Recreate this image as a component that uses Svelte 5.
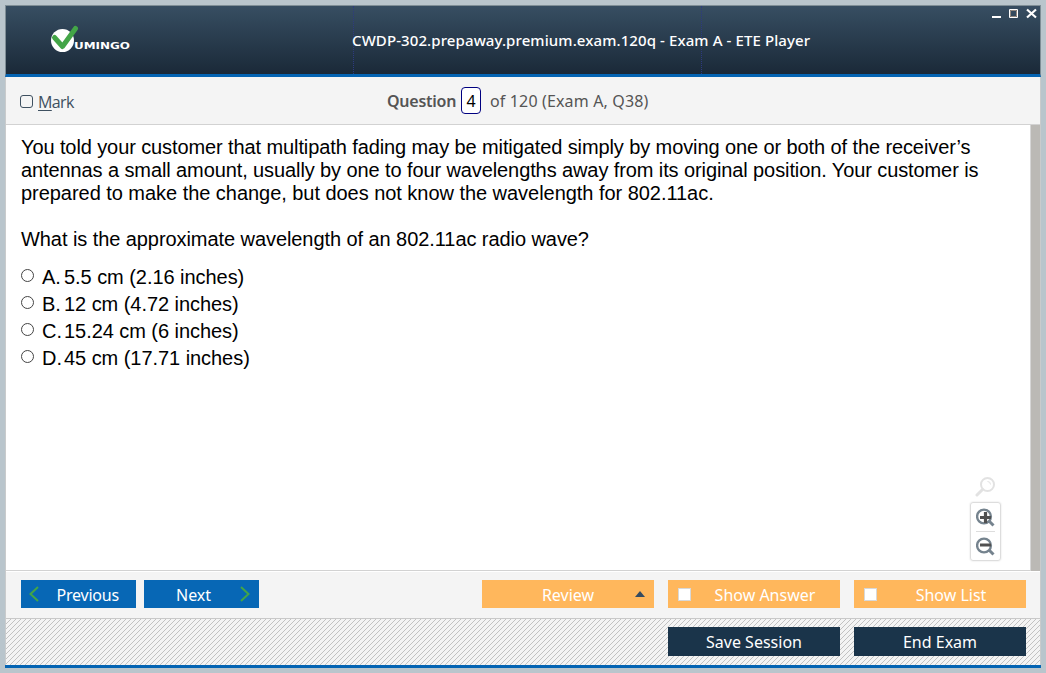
<script>
  const answers = [
    ['A.', '5.5 cm (2.16 inches)'],
    ['B.', '12 cm (4.72 inches)'],
    ['C.', '15.24 cm (6 inches)'],
    ['D.', '45 cm (17.71 inches)']
  ];
  const lines = [
    'You told your customer that multipath fading may be mitigated simply by moving one or both of the receiver’s',
    'antennas a small amount, usually by one to four wavelengths away from its original position. Your customer is',
    'prepared to make the change, but does not know the wavelength for 802.11ac.',
    '',
    'What is the approximate wavelength of an 802.11ac radio wave?'
  ];
</script>

<div class="window">
  <header>
    <svg class="logo" width="84" height="30" viewBox="0 0 84 30">
      <circle cx="12.5" cy="15.5" r="11.5" fill="#fff" />
      <path d="M4.500 12.500L12.500 21.500L25.500 3.500" fill="none" stroke="#43a547" stroke-width="5" stroke-linecap="round" stroke-linejoin="round" />
      <text x="24" y="24" textLength="56" lengthAdjust="spacingAndGlyphs" font-size="9.5" font-weight="bold" fill="#fff">UMINGO</text>
    </svg>
    <h1><span>CWDP-302.prepaway.premium.exam.120q - Exam A - ETE Player</span></h1>
    <svg class="controls" width="46" height="12" viewBox="0 0 46 12">
      <path d="M0 8h9v2H0z" fill="#fff" />
      <path d="M17.500 1.500h8v8h-8z" fill="none" stroke="#fff" />
      <path d="M18.500 2.500h6v6h-6z" fill="none" stroke="#93887f" />
      <path d="M35 1.500L44 9.500M44 1.500L35 9.500" stroke="#fff" stroke-width="2.200" />
    </svg>
  </header>
  <div class="bar">
    <label class="mark"><i></i><span><u>M</u>ark</span></label>
    <div class="counter"><b>Question</b><span class="num">4</span><span class="of">of 120 (Exam A, Q38)</span></div>
  </div>
  <main>
    <section>
      <div class="question">
        {#each lines as line, i}<p class:tight={i < 2} class:last={i === 4}>{line}</p>{/each}
      </div>
      <div class="answers">
        {#each answers as [letter, text]}
          <label><i></i><span class="letter">{letter}</span><span class="text">{text}</span></label>
        {/each}
      </div>
      <div class="zoom">
        <svg width="22" height="22" viewBox="0 0 22 22" fill="none" stroke="#e2e2e2">
          <circle cx="12.500" cy="8.500" r="6.500" stroke-width="2" /><path d="M7.500 13.500L2 19" stroke-width="3" stroke-linecap="round" /><path d="M12.500 5.500a3 3 0 0 1 3 3" />
        </svg>
        <div class="box">
          <svg width="20" height="22" viewBox="0 0 20 22" fill="none" stroke="#75838e">
            <circle cx="8" cy="9.500" r="6.900" stroke-width="2.400" /><path d="M13 14L17.500 18.500" stroke-width="3" /><path d="M4 10.500H15M9.500 5V16" stroke="#505050" stroke-width="3.200" />
          </svg>
          <hr />
          <svg width="20" height="22" viewBox="0 0 20 22" fill="none" stroke="#75838e">
            <circle cx="8" cy="9.500" r="6.900" stroke-width="2.400" /><path d="M13 14L17.500 18.500" stroke-width="3" /><path d="M4 9H15" stroke="#505050" stroke-width="3" />
          </svg>
        </div>
      </div>
    </section>
    <div class="scroll"></div>
  </main>
  <div class="actions">
    <button class="nav prev"><svg width="10" height="16" viewBox="0 0 10 16"><path d="M9 1L1.500 8L9 15" /></svg><span>Previous</span></button>
    <button class="nav next"><span>Next</span><svg width="10" height="16" viewBox="0 0 10 16"><path d="M1 1L8.500 8L1 15" /></svg></button>
    <button class="orange review"><span>Review</span><i></i></button>
    <button class="orange check"><i></i><span>Show Answer</span></button>
    <button class="orange check"><i></i><span>Show List</span></button>
  </div>
  <footer>
    <svg class="hatch" width="100%" height="100%" shape-rendering="crispEdges">
      <defs><pattern id="hatch" width="5" height="5" patternUnits="userSpaceOnUse">
        <path d="M4 0h1v1h-1zM3 1h1v1h-1zM2 2h1v1h-1zM1 3h1v1h-1zM0 4h1v1h-1z" fill="#c2c2c2" />
      </pattern></defs>
      <rect width="100%" height="100%" fill="url(#hatch)" />
    </svg>
    <button>Save Session</button>
    <button>End Exam</button>
  </footer>
</div>

<style>
  :global(body) { margin: 0; background: #b9c5cc; }
  * { box-sizing: border-box; }
  .window { width: 1036px; height: 663px; margin: 5px; border: solid #c9cbcc; border-width: 0 1px; display: flex; flex-direction: column; font-family: "Open Sans", sans-serif; background: #f4f4f4; }
  header { height: 72px; margin: 0 -1px; border: 1px solid #7f8e96; border-bottom: 3px solid #0464b3; background: linear-gradient(#374e62, #1a2938); display: grid; grid-template-columns: 347px 349px 1fr; flex: none; }
  .logo { margin: 19px 0 0 44px; font-family: "DejaVu Sans", sans-serif; }
  h1 { margin: 0; border: dotted #2d3a80; border-width: 0 1px; font-size: 15px; line-height: 20px; font-weight: 500; color: #fff; white-space: nowrap; padding-top: 24px; font-family: "Noto Sans", sans-serif; letter-spacing: 0.1px; }
  h1 span { margin-left: -2px; }
  .controls { justify-self: end; margin: 2px 2px 0 0; }
  .bar { height: 48px; border-bottom: 1px solid #d2d2d2; display: flex; align-items: center; color: #555; font-size: 16px; flex: none; white-space: nowrap; }
  .mark { display: flex; align-items: center; width: 381px; padding: 3px 0 0 14px; gap: 5px; color: #3e5060; letter-spacing: -0.6px; }
  .mark i { width: 13px; height: 13px; border: 1px solid #3e5060; border-radius: 3px; margin-top: -2px; }
  .mark u { text-underline-offset: 2px; }
  .counter { display: flex; align-items: center; font-family: "Noto Sans", sans-serif; }
  .counter b { font-weight: 600; width: 74px; letter-spacing: -0.25px; }
  .num { width: 20px; height: 27px; line-height: 27px; border: 1px solid #000080; border-radius: 4px; background: #fff; color: #000; text-align: center; }
  .of { margin-left: 9px; letter-spacing: 0.15px; }
  main { height: 447px; flex: none; display: flex; border-bottom: 1px solid #fff; }
  section { flex: 1; background: #fff; position: relative; border-bottom: 1px solid #d2d2d2; border-right: 1px solid #d6d6d6; font: 20px/23px "Liberation Sans", Arial, sans-serif; color: #000; padding: 11px 0 0 15px; }
  .scroll { width: 9px; background: #bbb9b5; }
  p { margin: 0; height: 23px; white-space: nowrap; letter-spacing: -0.04px; }
  .tight { letter-spacing: -0.1px; }
  .last { letter-spacing: -0.07px; }
  .answers { margin-top: 12px; }
  .answers label { height: 27px; display: flex; align-items: center; line-height: 27px; }
  .answers i { width: 13px; height: 13px; border: 1px solid #444; border-radius: 50%; margin: -3px 8px 0 0; }
  .answers span { padding-top: 2px; }
  .letter { width: 22px; white-space: nowrap; }
  .text { letter-spacing: -0.05px; }
  .zoom { position: absolute; right: 29px; bottom: 9px; width: 31px; display: flex; flex-direction: column; align-items: center; }
  .box { width: 31px; height: 59px; border: 1px solid #ddd; border-radius: 3px; box-shadow: 0 0 2px #ddd; display: flex; flex-direction: column; align-items: center; padding-top: 4px; margin-top: 4px; }
  .zoom svg { display: block; flex: none; }
  hr { width: 19px; height: 1px; border: 0; background: #ddd; margin: 2px 0 4px; flex: none; }
  button { border: 0; padding: 0; color: #fff; font: 16px/30px "Noto Sans", sans-serif; height: 28px; white-space: nowrap; }
  .actions { height: 47px; flex: none; border-bottom: 1px solid #c9c9c9; display: flex; padding: 8px 14px 0 15px; }
  .nav { width: 115px; background: #0767b5; display: flex; align-items: center; justify-content: space-between; margin-right: 8px; }
  .nav path { fill: none; stroke: #43a547; stroke-width: 2; }
  .nav span { padding-top: 1px; }
  .prev { padding: 0 17px 0 8px; }
  .prev span { letter-spacing: -0.2px; }
  .next { padding: 0 9px 0 32px; }
  .orange { background: #ffb75c; width: 172px; margin-left: 14px; position: relative; text-align: center; }
  .orange span { display: block; height: 28px; line-height: 30px; }
  .review { margin-left: auto; }
  .review i { position: absolute; right: 9px; top: 11px; border: solid transparent; border-width: 0 5px 6px; border-bottom-color: #344b60; }
  .check i { position: absolute; left: 10px; top: 8px; width: 13px; height: 13px; background: #fff; border: 1px solid #d8d8d8; }
  .check span { padding-left: 22px; }
  footer { height: 49px; flex: none; position: relative; display: flex; justify-content: flex-end; gap: 14px; padding: 8px 14px 0 0; background: #f4f4f4; }
  footer::after { content: ""; position: absolute; left: -1px; right: -1px; bottom: 0; height: 3px; background: #0464b3; }
  .hatch { position: absolute; inset: 0; overflow: hidden; }
  footer button { position: relative; width: 172px; height: 29px; line-height: 30px; background: #1a344a; }
</style>
